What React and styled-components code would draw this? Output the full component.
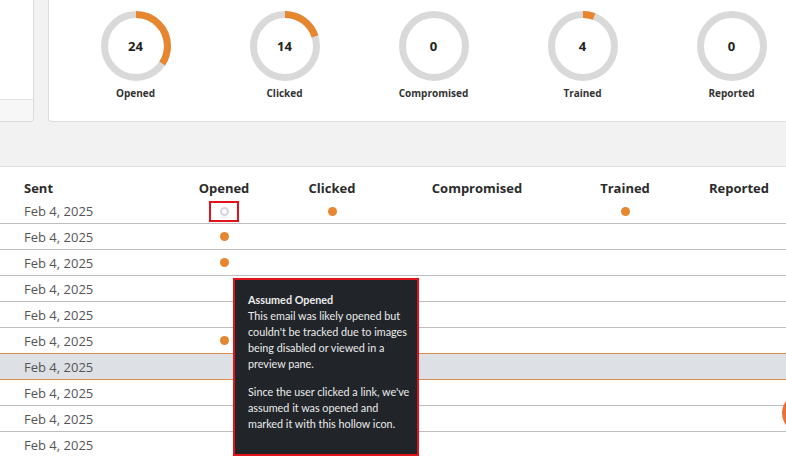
import React from 'react'
import styled, { createGlobalStyle } from 'styled-components'

const GlobalStyle = createGlobalStyle`
  body {
    margin: 0;
    background: #f2f2f2;
    font-family: 'Open Sans', 'Liberation Sans', sans-serif;
    overflow: hidden;
  }
`

const ORANGE = '#e6862f'
const TOTAL = 70

const stats = [
  { label: 'Opened', value: 24 },
  { label: 'Clicked', value: 14 },
  { label: 'Compromised', value: 0 },
  { label: 'Trained', value: 4 },
  { label: 'Reported', value: 0 },
]

const rows = [
  { opened: 'assumed', clicked: true, trained: true },
  { opened: true },
  { opened: true },
  {},
  {},
  { opened: true },
  { active: true },
  {},
  {},
  {},
]

const Donut = ({ value }) => {
  const r = 31.5
  const c = 2 * Math.PI * r
  const part = (value / TOTAL) * c
  return (
    <svg width='70' height='70' viewBox='0 0 70 70'>
      <circle cx='35' cy='35' r={r} fill='none' stroke='#d9d9d9' strokeWidth='7' />
      {value > 0 && (
        <circle
          cx='35'
          cy='35'
          r={r}
          fill='none'
          stroke={ORANGE}
          strokeWidth='7'
          strokeDasharray={`${part} ${c}`}
          transform='rotate(-90 35 35)'
        />
      )}
    </svg>
  )
}

const App = () => {
  return (
    <Page>
      <GlobalStyle />
      <TopRow>
        <SideCard>
          <SideBody />
          <SideFooter />
        </SideCard>
        <StatsCard>
          {stats.map((s) => (
            <Stat key={s.label}>
              <Ring>
                <Donut value={s.value} />
                <RingValue>{s.value}</RingValue>
              </Ring>
              <StatLabel>{s.label}</StatLabel>
            </Stat>
          ))}
        </StatsCard>
      </TopRow>
      <Gap />
      <TablePanel>
        <HeadRow>
          <HeadCell $left>Sent</HeadCell>
          <HeadCell>Opened</HeadCell>
          <HeadCell>Clicked</HeadCell>
          <HeadCell>Compromised</HeadCell>
          <HeadCell>Trained</HeadCell>
          <HeadCell>Reported</HeadCell>
        </HeadRow>
        {rows.map((row, i) => (
          <Row key={i} $active={row.active} $first={i === 0}>
            <DateCell>Feb 4, 2025</DateCell>
            <Cell>
              {row.opened === 'assumed' && (
                <Marked>
                  <Dot $hollow />
                </Marked>
              )}
              {row.opened === true && <Dot />}
            </Cell>
            <Cell>{row.clicked && <Dot />}</Cell>
            <Cell />
            <Cell>{row.trained && <Dot />}</Cell>
            <Cell />
          </Row>
        ))}
        <Tooltip>
          <TipInner>
            <TipTitle>Assumed Opened</TipTitle>
            <TipText>
              This email was likely opened but couldn't be tracked due to images
              being disabled or viewed in a preview pane.
            </TipText>
            <TipText>
              Since the user clicked a link, we've assumed it was opened and
              marked it with this hollow icon.
            </TipText>
          </TipInner>
        </Tooltip>
      </TablePanel>
      <Fab />
    </Page>
  )
}

const Page = styled.div`
  position: relative;
  width: 786px;
  height: 456px;
  overflow: hidden;
`

const TopRow = styled.div`
  display: grid;
  grid-template-columns: 34px 1fr;
  gap: 14px;
  height: 122px;
`

const SideCard = styled.div`
  display: flex;
  flex-direction: column;
  background: #fff;
  border: 1px solid #dcdcdc;
  border-top: none;
  border-left: none;
  border-radius: 0 0 4px 0;
  overflow: hidden;
`

const SideBody = styled.div`
  flex: 1;
`

const SideFooter = styled.div`
  height: 21px;
  background: #f7f7f7;
  border-top: 1px solid #e3e3e3;
`

const StatsCard = styled.div`
  display: grid;
  grid-template-columns: repeat(5, 149px);
  padding-left: 12px;
  background: #fff;
  border: 1px solid #dcdcdc;
  border-top: none;
  border-right: none;
  border-radius: 0 0 0 4px;
`

const Stat = styled.div`
  display: flex;
  flex-direction: column;
  align-items: center;
  padding-top: 11px;
`

const Ring = styled.div`
  position: relative;
  width: 70px;
  height: 70px;
  svg {
    display: block;
  }
`

const RingValue = styled.span`
  position: absolute;
  inset: 0;
  display: flex;
  align-items: center;
  justify-content: center;
  font-size: 13px;
  font-weight: 700;
  color: #222;
`

const StatLabel = styled.div`
  margin-top: 5px;
  font-size: 10px;
  font-weight: 700;
  color: #333;
`

const Gap = styled.div`
  height: 44px;
`

const TablePanel = styled.div`
  position: relative;
  background: #fff;
  border-top: 1px solid #dcdcdc;
`

const grid = `
  display: grid;
  grid-template-columns: 156px 88px 128px 162px 134px 94px;
  padding-left: 24px;
`

const HeadRow = styled.div`
  ${grid}
  padding-top: 13px;
  height: 19px;
`

const HeadCell = styled.div`
  text-align: ${(p) => (p.$left ? 'left' : 'center')};
  font-size: 13px;
  line-height: 16px;
  font-weight: 700;
  color: #2b2b2b;
`

const Row = styled.div`
  ${grid}
  height: ${(p) => (p.$first ? '24px' : '25px')};
  align-items: center;
  border-bottom: 1px solid ${(p) => (p.$active ? '#e08a4c' : '#bdbdbd')};
  background: ${(p) => (p.$active ? '#dde0e4' : '#fff')};
  box-shadow: ${(p) => (p.$active ? '0 -1px 0 #e08a4c' : 'none')};
`

const DateCell = styled.div`
  font-size: 13px;
  color: #555;
`

const Cell = styled.div`
  display: flex;
  justify-content: center;
  align-items: center;
`

const Dot = styled.span`
  display: block;
  width: 9px;
  height: 9px;
  border-radius: 50%;
  box-sizing: border-box;
  background: ${(p) => (p.$hollow ? 'transparent' : ORANGE)};
  border: ${(p) => (p.$hollow ? '2px solid #d3d6db' : 'none')};
`

const Marked = styled.span`
  display: flex;
  align-items: center;
  justify-content: center;
  width: 26px;
  height: 17px;
  border: 2px solid #e3131b;
`

const Tooltip = styled.div`
  position: absolute;
  left: 233px;
  top: 111px;
  width: 182px;
  border: 2px solid #e3131b;
`

const TipInner = styled.div`
  background: #212529;
  padding: 12px 3px 22px 13px;
  color: #ececec;
  font-family: Lato, 'Liberation Sans', sans-serif;
  font-size: 10.8px;
  line-height: 16px;
`

const TipTitle = styled.div`
  font-weight: 700;
`

const TipText = styled.p`
  margin: 0 0 12px;
  &:last-child {
    margin-bottom: 0;
  }
`

const Fab = styled.div`
  position: absolute;
  left: 782px;
  top: 393px;
  width: 40px;
  height: 40px;
  border-radius: 50%;
  background: #e8703a;
`

export default App
